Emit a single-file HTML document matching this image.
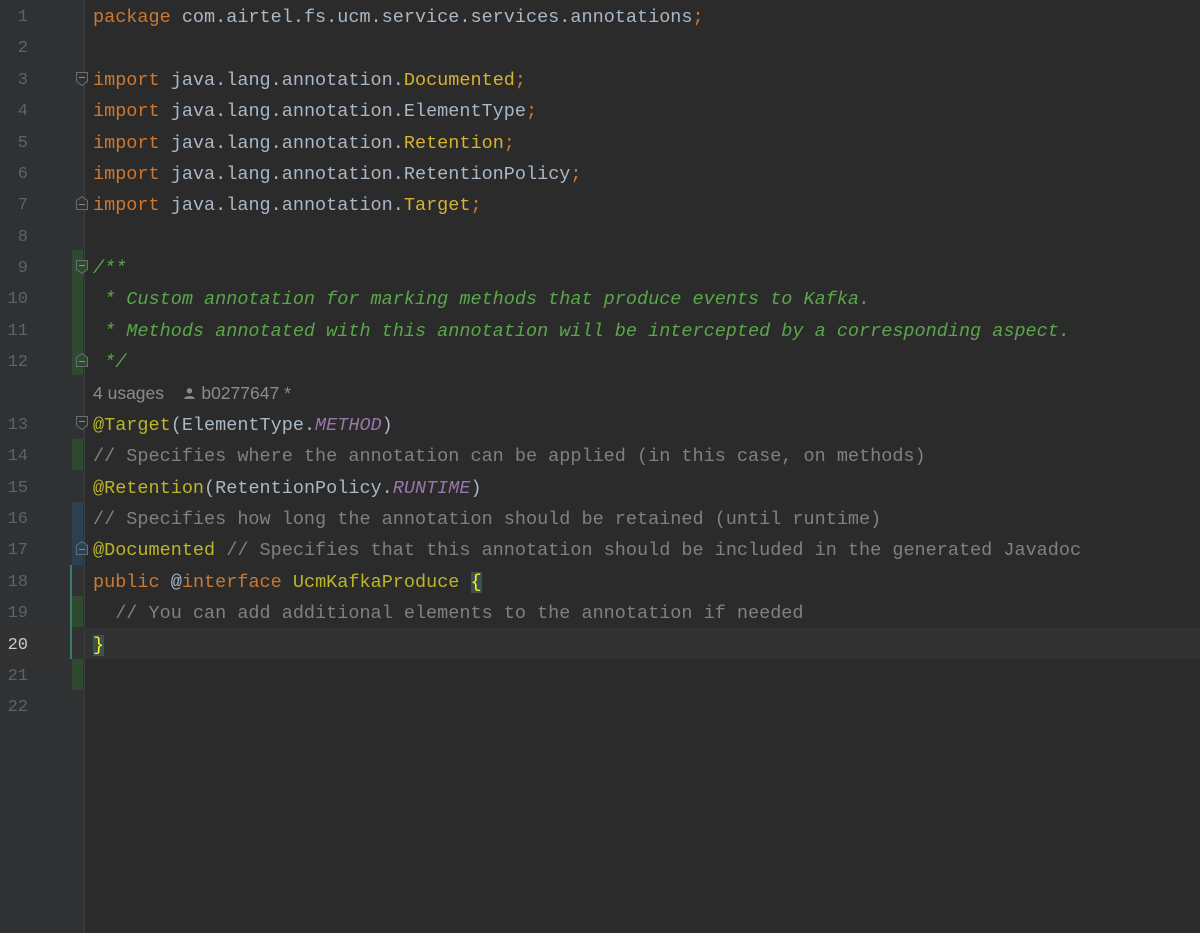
<!DOCTYPE html>
<html><head><meta charset="utf-8"><style>
html,body{margin:0;padding:0;}
body{width:1200px;height:933px;background:#2b2b2b;position:relative;overflow:hidden;font-family:"Liberation Mono",monospace;font-size:18.5px;}
.gut{position:absolute;left:0;top:0;width:84px;height:933px;background:#2f3133;}
.sep{position:absolute;left:84px;top:0;width:1px;height:933px;background:#3c3f41;}
.cur{position:absolute;left:0;top:628px;width:1200px;height:31px;background:#323232;}
.ln{position:absolute;left:0;width:28px;text-align:right;color:#5e6366;line-height:31px;font-size:17px;margin-top:2px}
.c{position:absolute;left:93px;line-height:31px;white-space:pre;color:#a9b7c6;margin-top:2px}
.k{color:#cc7832}.a{color:#bbb529}.y{color:#d5b230}.p{color:#9876aa;font-style:italic}.cm{color:#808080}.d{color:#5aa64a;font-style:italic}
.bar{position:absolute;left:72px;width:11px;}
.g{background:#2e4a2f}.b{background:#2b4050}
.tl{position:absolute;left:70px;width:2px;background:#3b7a6f}
.fold{position:absolute;left:76px;width:12px;height:14px;}
.u{position:absolute;left:93px;top:381px;line-height:24px;color:#8a8d90;font-family:"Liberation Sans",sans-serif;font-size:17.5px;}
</style></head><body>
<div class="gut"></div>
<div class="cur"></div>
<div class="bar g" style="top:250px;height:125px"></div>
<div class="bar g" style="top:439px;height:31px"></div>
<div class="bar b" style="top:502px;height:63px"></div>
<div class="bar g" style="top:596px;height:31px"></div>
<div class="bar g" style="top:659px;height:31px"></div>
<div class="tl" style="top:565px;height:94px"></div>
<div class="sep"></div>

<div class="ln" style="top:0">1</div>
<div class="ln" style="top:31px">2</div>
<div class="ln" style="top:63px">3</div>
<div class="ln" style="top:94px">4</div>
<div class="ln" style="top:126px">5</div>
<div class="ln" style="top:157px">6</div>
<div class="ln" style="top:188px">7</div>
<div class="ln" style="top:220px">8</div>
<div class="ln" style="top:251px">9</div>
<div class="ln" style="top:282px">10</div>
<div class="ln" style="top:314px">11</div>
<div class="ln" style="top:345px">12</div>
<div class="ln" style="top:408px">13</div>
<div class="ln" style="top:439px">14</div>
<div class="ln" style="top:471px">15</div>
<div class="ln" style="top:502px">16</div>
<div class="ln" style="top:533px">17</div>
<div class="ln" style="top:565px">18</div>
<div class="ln" style="top:596px">19</div>
<div class="ln" style="top:628px;color:#c8cacc">20</div>
<div class="ln" style="top:659px">21</div>
<div class="ln" style="top:690px">22</div>

<svg class="fold" style="top:72px" viewBox="0 0 12 14"><path d="M0.5 0.5H11.5V9.5L6 13.5L0.5 9.5Z" fill="#2f3133" stroke="#6b6e70"/><path d="M3 5.5H9" stroke="#8a8d90"/></svg>
<svg class="fold" style="top:196px" viewBox="0 0 12 14"><path d="M0.5 13.5H11.5V4.5L6 0.5L0.5 4.5Z" fill="#2f3133" stroke="#6b6e70"/><path d="M3 8.5H9" stroke="#8a8d90"/></svg>
<svg class="fold" style="top:260px" viewBox="0 0 12 14"><path d="M0.5 0.5H11.5V9.5L6 13.5L0.5 9.5Z" fill="#2e4a2f" stroke="#6b6e70"/><path d="M3 5.5H9" stroke="#8a8d90"/></svg>
<svg class="fold" style="top:353px" viewBox="0 0 12 14"><path d="M0.5 13.5H11.5V4.5L6 0.5L0.5 4.5Z" fill="#2e4a2f" stroke="#6b6e70"/><path d="M3 8.5H9" stroke="#8a8d90"/></svg>
<svg class="fold" style="top:416px" viewBox="0 0 12 14"><path d="M0.5 0.5H11.5V9.5L6 13.5L0.5 9.5Z" fill="#2f3133" stroke="#6b6e70"/><path d="M3 5.5H9" stroke="#8a8d90"/></svg>
<svg class="fold" style="top:541px" viewBox="0 0 12 14"><path d="M0.5 13.5H11.5V4.5L6 0.5L0.5 4.5Z" fill="#2b4050" stroke="#6b6e70"/><path d="M3 8.5H9" stroke="#8a8d90"/></svg>

<div class="c" style="top:0"><span class="k">package</span> com.airtel.fs.ucm.service.services.annotations<span class="k">;</span></div>
<div class="c" style="top:63px"><span class="k">import</span> java.lang.annotation.<span class="y">Documented</span><span class="k">;</span></div>
<div class="c" style="top:94px"><span class="k">import</span> java.lang.annotation.ElementType<span class="k">;</span></div>
<div class="c" style="top:126px"><span class="k">import</span> java.lang.annotation.<span class="y">Retention</span><span class="k">;</span></div>
<div class="c" style="top:157px"><span class="k">import</span> java.lang.annotation.RetentionPolicy<span class="k">;</span></div>
<div class="c" style="top:188px"><span class="k">import</span> java.lang.annotation.<span class="y">Target</span><span class="k">;</span></div>
<div class="c d" style="top:251px">/**</div>
<div class="c d" style="top:282px"> * Custom annotation for marking methods that produce events to Kafka.</div>
<div class="c d" style="top:314px"> * Methods annotated with this annotation will be intercepted by a corresponding aspect.</div>
<div class="c d" style="top:345px"> */</div>
<div class="u">4 usages &nbsp;&nbsp;&nbsp;<svg width="13" height="13" viewBox="0 0 12 12" style="vertical-align:-1px"><circle cx="6" cy="3.5" r="2.5" fill="#8a8d90"/><path d="M1 11C1 7.5 11 7.5 11 11Z" fill="#8a8d90"/></svg> b0277647 *</div>
<div class="c" style="top:408px"><span class="a">@Target</span>(ElementType.<span class="p">METHOD</span>)</div>
<div class="c cm" style="top:439px">// Specifies where the annotation can be applied (in this case, on methods)</div>
<div class="c" style="top:471px"><span class="a">@Retention</span>(RetentionPolicy.<span class="p">RUNTIME</span>)</div>
<div class="c cm" style="top:502px">// Specifies how long the annotation should be retained (until runtime)</div>
<div class="c" style="top:533px"><span class="a">@Documented</span> <span class="cm">// Specifies that this annotation should be included in the generated Javadoc</span></div>
<div class="c" style="top:565px"><span class="k">public</span> @<span class="k">interface</span> <span class="a">UcmKafkaProduce</span> <span style="color:#ffef28;background:#3b514d">{</span></div>
<div class="c cm" style="top:596px">  // You can add additional elements to the annotation if needed</div>
<div class="c" style="top:628px"><span style="color:#ffef28;background:#3b514d">}</span></div>
</body></html>
